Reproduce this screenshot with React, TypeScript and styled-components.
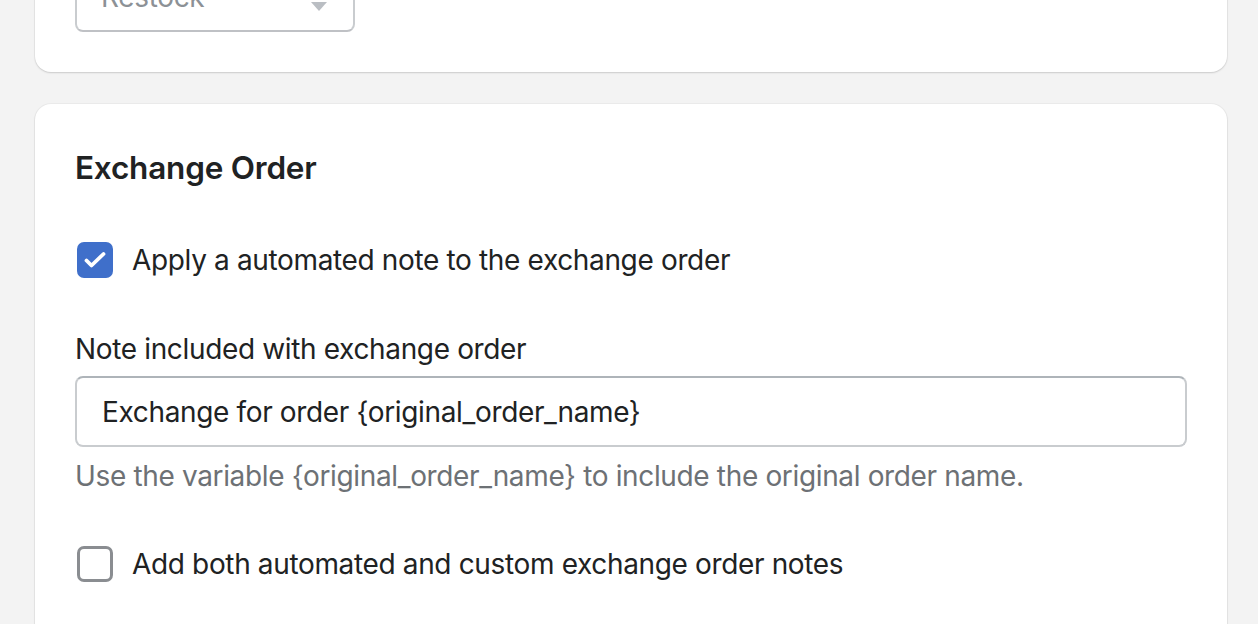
import React, { useState } from "react";
import styled, { createGlobalStyle } from "styled-components";

const GlobalStyle = createGlobalStyle`
  html, body {
    margin: 0;
    padding: 0;
    background: #f3f3f3;
    font-family: Inter, "Noto Sans", sans-serif;
    color: #202223;
    overflow: hidden;
  }
`;

const Page = styled.div`
  display: flex;
  flex-direction: column;
  gap: 32px;
  width: 1192px;
  padding-left: 35px;
  margin-top: -38px;
`;

const Card = styled.section`
  background: #fff;
  border-radius: 16px;
  box-shadow: 0 1px 2px rgba(0, 0, 0, 0.14), 0 0 0 1px rgba(0, 0, 0, 0.03);
  padding: ${(p: { $pad: string }) => p.$pad};
`;

const Select = styled.div`
  position: relative;
  width: 280px;
  height: 70px;
  box-sizing: border-box;
  border: 2px solid #c9cccf;
  border-bottom-color: #bfc1c5;
  border-radius: 8px;
  padding: 0 24px;
  display: flex;
  align-items: center;
  font-size: 28px;
  letter-spacing: -0.35px;
  color: #8c9196;
`;

const Caret = styled.span`
  position: absolute;
  right: 26px;
  top: 38px;
  width: 0;
  height: 0;
  border-left: 8px solid transparent;
  border-right: 8px solid transparent;
  border-top: 9px solid #babec3;
`;

const Heading = styled.h2`
  margin: 0 0 53px;
  font-size: 31.5px;
  line-height: 40px;
  font-weight: 600;
  letter-spacing: -0.2px;
`;

const CheckRow = styled.label`
  display: flex;
  align-items: center;
  gap: 19px;
  font-size: 28px;
  line-height: 38px;
  letter-spacing: -0.35px;
  cursor: pointer;
`;

const Box = styled.span<{ $checked: boolean }>`
  width: 36px;
  height: 36px;
  box-sizing: border-box;
  border-radius: 7px;
  flex-shrink: 0;
  display: flex;
  align-items: center;
  justify-content: center;
  margin-left: 2px;
  background: ${(p) => (p.$checked ? "#3f6fca" : "#fff")};
  border: ${(p) => (p.$checked ? "none" : "3px solid #8a8d91")};
`;

const Field = styled.div`
  margin-top: 51px;
  margin-bottom: 50px;
`;

const Label = styled.div`
  font-size: 28px;
  line-height: 38px;
  letter-spacing: -0.35px;
  margin-bottom: 8px;
`;

const Input = styled.input`
  display: block;
  width: 100%;
  height: 71px;
  box-sizing: border-box;
  border: 2px solid #c9cccf;
  border-top-color: #aeb4b9;
  border-radius: 8px;
  padding: 0 25px;
  font-family: inherit;
  font-size: 28px;
  letter-spacing: -0.35px;
  color: #202223;
  outline: none;
`;

const Help = styled.div`
  margin-top: 10px;
  font-size: 28px;
  line-height: 38px;
  letter-spacing: -0.35px;
  color: #6d7175;
`;

function Checkbox({
  checked,
  onToggle,
  children,
}: {
  checked: boolean;
  onToggle: () => void;
  children: React.ReactNode;
}) {
  return (
    <CheckRow onClick={onToggle}>
      <Box $checked={checked}>
        {checked && (
          <svg width="36" height="36" viewBox="0 0 36 36">
            <path
              d="M9.5 18.5l5 5L26.5 12"
              fill="none"
              stroke="#fff"
              strokeWidth="3.8"
              strokeLinecap="round"
              strokeLinejoin="round"
            />
          </svg>
        )}
      </Box>
      {children}
    </CheckRow>
  );
}

export default function App() {
  const [autoNote, setAutoNote] = useState(true);
  const [bothNotes, setBothNotes] = useState(false);
  const [note, setNote] = useState("Exchange for order {original_order_name}");

  return (
    <>
      <GlobalStyle />
      <Page>
        <Card $pad="0 40px 40px">
          <Select>
            Restock
            <Caret />
          </Select>
        </Card>
        <Card $pad="44px 40px 60px">
          <Heading>Exchange Order</Heading>
          <Checkbox checked={autoNote} onToggle={() => setAutoNote((v) => !v)}>
            Apply a automated note to the exchange order
          </Checkbox>
          <Field>
            <Label>Note included with exchange order</Label>
            <Input value={note} onChange={(e) => setNote(e.target.value)} />
            <Help>
              Use the variable {"{original_order_name}"} to include the original
              order name.
            </Help>
          </Field>
          <Checkbox checked={bothNotes} onToggle={() => setBothNotes((v) => !v)}>
            Add both automated and custom exchange order notes
          </Checkbox>
        </Card>
      </Page>
    </>
  );
}
